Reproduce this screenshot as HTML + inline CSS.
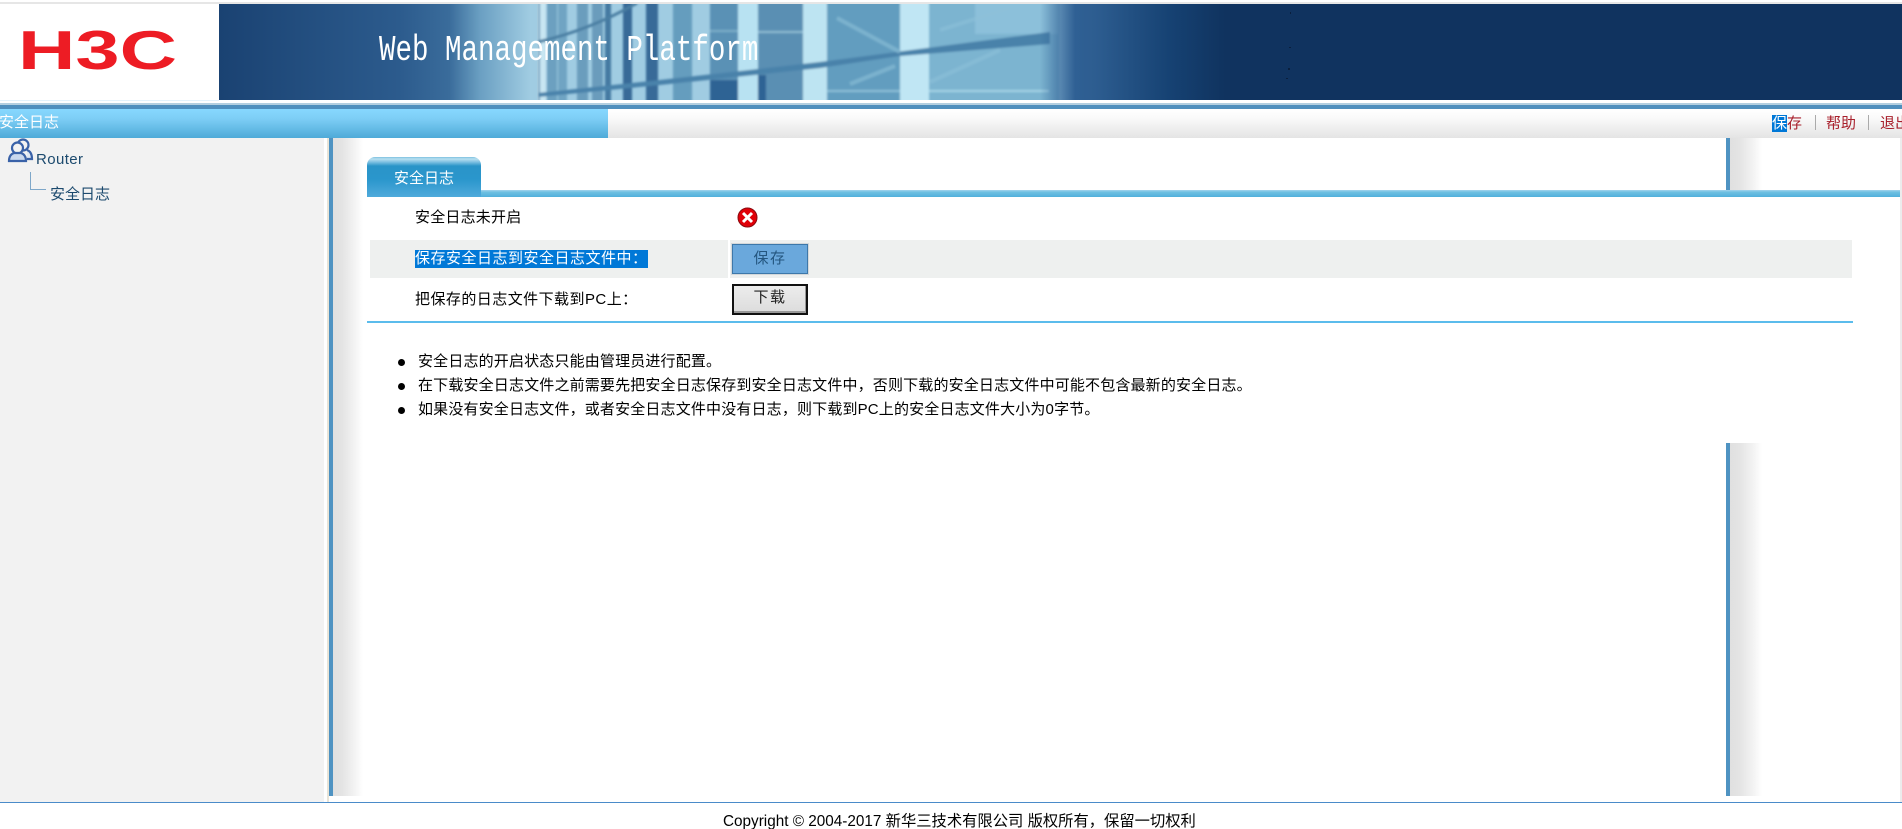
<!DOCTYPE html>
<html><head><meta charset="utf-8"><title>安全日志</title>
<style>
html,body{margin:0;padding:0;width:1902px;height:829px;overflow:hidden;background:#fff}
body{position:relative;font-family:"Liberation Sans","WenQuanYi Zen Hei","Noto Sans CJK SC",sans-serif;font-size:15px;color:#000}
.a{position:absolute}
.t{position:absolute;white-space:nowrap;line-height:18px;height:18px}
.sel{background:#0078d7;color:#fff}
li{height:24px;line-height:24px;white-space:nowrap;letter-spacing:.16px;position:relative}
li i{position:absolute;left:-20px;top:9px;width:7px;height:7px;border-radius:50%;background:#000}
</style></head><body>
<div class="a" style="left:0;top:0;width:1902px;height:2px;background:#fff"></div>
<div class="a" style="left:0;top:2px;width:1902px;height:2px;background:#e6e6e6"></div>
<svg class="a" style="left:0;top:0" width="1902" height="110" viewBox="0 0 1902 110">
<defs>
<linearGradient id="bg" x1="219" x2="1902" y1="0" y2="0" gradientUnits="userSpaceOnUse">
<stop offset="0" stop-color="#1a4272"/><stop offset=".107" stop-color="#2c5b8d"/><stop offset=".137" stop-color="#3a6c9b"/><stop offset=".155" stop-color="#6a9fc2"/><stop offset=".185" stop-color="#a0cce2"/><stop offset=".5" stop-color="#a0cce2"/></linearGradient>
<linearGradient id="fade" x1="1040" x2="1225" y1="0" y2="0" gradientUnits="userSpaceOnUse">
<stop offset="0" stop-color="#2f6094" stop-opacity="0"/><stop offset=".1" stop-color="#2f6094" stop-opacity=".6"/><stop offset=".19" stop-color="#2f6094"/><stop offset=".3" stop-color="#2d5d90"/><stop offset=".7" stop-color="#164273"/><stop offset="1" stop-color="#10335f"/></linearGradient>
<filter id="soft" x="0" y="0" width="100%" height="100%"><feGaussianBlur stdDeviation="1"/></filter>
<clipPath id="bc"><rect x="530" y="4" width="560" height="96"/></clipPath>
</defs>
<rect x="0" y="4" width="219" height="96" fill="#fff"/>
<text x="18" y="69" font-family="Liberation Sans" font-weight="700" font-size="55" fill="#ed1c24" textLength="159" lengthAdjust="spacingAndGlyphs">H3C</text>
<rect x="219" y="4" width="1683" height="96" fill="url(#bg)"/>
<g clip-path="url(#bc)"><g filter="url(#soft)">
<rect x="537" y="0" width="9" height="104" fill="#c8e6f2"/><rect x="538" y="0" width="2" height="104" fill="#6f9fbe"/>
<rect x="547" y="0" width="10" height="104" fill="#6ca0c0"/><rect x="558" y="0" width="9" height="104" fill="#70a4c3"/>
<rect x="577" y="0" width="11" height="104" fill="#6a9dbd"/><rect x="592" y="0" width="11" height="104" fill="#6a9cbc"/>
<rect x="605" y="0" width="6" height="104" fill="#457aa2"/><rect x="623" y="0" width="9" height="104" fill="#376a98"/>
<rect x="646" y="0" width="12" height="104" fill="#376a98"/><rect x="673" y="0" width="19" height="104" fill="#659dbe"/>
<rect x="710" y="0" width="28" height="104" fill="#5a91b5"/><rect x="738" y="0" width="20" height="104" fill="#b8e2f2"/>
<rect x="758" y="0" width="45" height="104" fill="#5a8fb3"/><rect x="803" y="0" width="24" height="104" fill="#bde4f2"/>
<rect x="827" y="0" width="73" height="104" fill="#629dbf"/><rect x="900" y="0" width="29" height="104" fill="#c0e6f4"/>
<rect x="929" y="0" width="130" height="104" fill="#7cb4d0"/>
<rect x="975" y="0" width="85" height="34" fill="#8cc0da"/>
<rect x="758" y="31" width="45" height="2" fill="#8fbcd4"/><rect x="710" y="30" width="28" height="2" fill="#7dafc9"/>
<rect x="827" y="90" width="73" height="2" fill="#8dc0d8"/><rect x="929" y="90" width="120" height="2" fill="#a5d4e6"/>
<rect x="710" y="80" width="28" height="24" fill="#2f6394"/><rect x="758" y="75" width="8" height="29" fill="#2f6394"/>
<path d="M538 93 L660 80 L820 62 L1050 32 L1050 44 L900 56 L820 68 L660 85 L538 97Z" fill="#4a82aa"/>
<path d="M538 42 Q590 30 637 3" stroke="#4a7ea2" stroke-width="3" fill="none"/>
<path d="M837 18L900 52M940 30L1010 8M930 82L1000 50M850 84L895 66" stroke="#8ec0d8" stroke-width="4" fill="none" opacity=".6"/>
</g></g>
<rect x="1040" y="4" width="862" height="96" fill="url(#fade)"/>
<g fill="#0a1f3d"><rect x="1290" y="12" width="1" height="2"/><rect x="1289" y="47" width="2" height="1"/><rect x="1288" y="68" width="2" height="2"/><rect x="1286" y="78" width="2" height="1"/></g>
<text transform="translate(379,60) scale(.764,1)" font-family="Liberation Mono" font-size="36" fill="#fff">Web Management Platform</text>
<rect x="0" y="100" width="219" height="1" fill="#e4f2fb"/>
<rect x="0" y="103" width="1902" height="2" fill="#b3cfe0"/>
<rect x="0" y="105" width="1902" height="4" fill="#4f8fbd"/>
</svg>
<div class="a" style="left:0;top:109px;width:608px;height:29px;background:linear-gradient(#87d8ff 0,#7ccdf5 35%,#4eaad8 100%)"></div>
<div class="a" style="left:608px;top:109px;width:1294px;height:29px;background:linear-gradient(#fff 0,#fafafa 30%,#e4e4e4 100%)"></div>
<div class="t" style="left:-1px;top:114px;color:#fff">安全日志</div>
<div class="t" style="left:1772px;top:115px;color:#a8202c"><span class="sel">保</span>存</div>
<div class="a" style="left:1815px;top:115px;width:1px;height:15px;background:#aaa"></div>
<div class="t" style="left:1826px;top:115px;color:#a8202c">帮助</div>
<div class="a" style="left:1868px;top:115px;width:1px;height:15px;background:#aaa"></div>
<div class="t" style="left:1880px;top:115px;color:#a8202c;width:22px;overflow:hidden">退出</div>

<div class="a" style="left:0;top:138px;width:324px;height:664px;background:#f2f2f2"></div>
<div class="a" style="left:327px;top:138px;width:2px;height:664px;background:#e8e4d8"></div>
<div class="a" style="left:329px;top:138px;width:4px;height:658px;background:#4f93c2"></div>
<div class="a" style="left:333px;top:138px;width:30px;height:658px;background:linear-gradient(90deg,#e0e0e0,#e4e4e4 30%,#f4f4f4 75%,#fff)"></div>
<div class="a" style="left:1726px;top:138px;width:4px;height:658px;background:#4f93c2"></div>
<div class="a" style="left:1730px;top:138px;width:32px;height:658px;background:linear-gradient(90deg,#e0e0e0,#e4e4e4 30%,#f4f4f4 75%,#fff)"></div>
<div class="a" style="left:1900px;top:138px;width:2px;height:664px;background:#ececec"></div>
<div class="a" style="left:363px;top:197px;width:1537px;height:246px;background:#fff"></div>
<div class="a" style="left:0;top:802px;width:1902px;height:1px;background:#4a8bc9"></div>

<svg class="a" style="left:6px;top:137px" width="28" height="28" viewBox="0 0 28 28" fill="none" stroke="#3a62a8" stroke-width="2.200">
<circle cx="17" cy="8" r="5.5" fill="#f2f2f2"/><path d="M21 13c3 1 5 4 5 9h-5" fill="#dfe8f4"/>
<circle cx="11.500" cy="11" r="5.500" fill="#f2f2f2"/><path d="M3 24c0-5 2-7 5-8h7c3 1 5 3 5 8z" fill="#c9d8ee"/>
</svg>
<div class="t" style="left:36px;top:151px;color:#1c4a6e;letter-spacing:.4px">Router</div>
<div class="a" style="left:30px;top:172px;width:15px;height:17px;border-left:1px solid #7ea7c9;border-bottom:1px solid #7ea7c9"></div>
<div class="t" style="left:50px;top:186px;color:#1c4a6e">安全日志</div>

<div class="a" style="left:367px;top:157px;width:114px;height:40px;border-radius:8px 8px 0 0/8px 8px 0 0;background:linear-gradient(#7cc0e0 0,#b8e0f0 2px,#7fc0e2 5px,#2a94c8 9px,#2a96cc 55%,#4faadb 100%)"></div>
<div class="t" style="left:394px;top:170px;color:#fff">安全日志</div>
<div class="a" style="left:481px;top:190px;width:1419px;height:7px;background:linear-gradient(#a4d4ec 0,#6fc0e2 30%,#50b0dc 100%)"></div>

<div class="t" style="left:415px;top:209px;letter-spacing:.2px">安全日志未开启</div>
<svg class="a" style="left:737px;top:207px" width="21" height="21" viewBox="0 0 21 21"><circle cx="10.500" cy="10.500" r="9.500" fill="#e00008" stroke="#8a0a10"/><path d="M6 6L15 15M15 6L6 15" stroke="#fff" stroke-width="3"/></svg>

<div class="a" style="left:370px;top:240px;width:358px;height:38px;background:#eef0ef"></div>
<div class="a" style="left:730px;top:240px;width:1122px;height:38px;background:#eef0ef"></div>
<div class="t" style="left:415px;top:250px;letter-spacing:.5px;background:#0078d7;color:#fff;width:233px;overflow:hidden">保存安全日志到安全日志文件中：</div>
<div class="a" style="left:732px;top:244px;width:74px;height:28px;border:1px solid #3d78aa;background:#6aa8dc;box-shadow:0 0 0 1px #d4d8da;color:#24567f;text-align:center;line-height:27px;letter-spacing:1.5px">保存</div>
<div class="t" style="left:415px;top:291px;letter-spacing:.45px">把保存的日志文件下载到PC上：</div>
<div class="a" style="left:732px;top:284px;width:72px;height:27px;border:2px solid #111;background:linear-gradient(#ececec,#dcdcdc);box-shadow:inset -1px -2px 0 #999;color:#222;text-align:center;line-height:23px;letter-spacing:1.5px">下载</div>
<div class="a" style="left:367px;top:321px;width:1486px;height:2px;background:#5bbcec"></div>

<ul class="a" style="left:418px;top:350px;margin:0;padding:0;list-style:none;color:#000">
<li><i></i>安全日志的开启状态只能由管理员进行配置。</li>
<li><i></i>在下载安全日志文件之前需要先把安全日志保存到安全日志文件中，否则下载的安全日志文件中可能不包含最新的安全日志。</li>
<li><i></i>如果没有安全日志文件，或者安全日志文件中没有日志，则下载到PC上的安全日志文件大小为0字节。</li>
</ul>

<div class="t" style="left:723px;top:813px;font-size:15.3px">Copyright © 2004-2017 新华三技术有限公司 版权所有，保留一切权利</div>
</body></html>
